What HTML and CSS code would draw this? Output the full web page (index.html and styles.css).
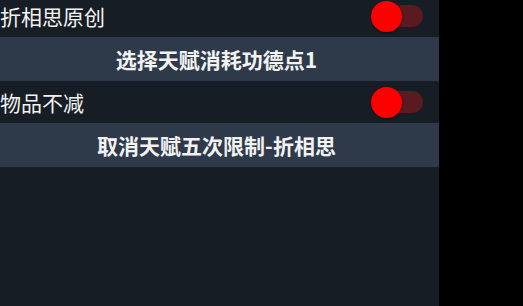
FILE: index.html
```html
<!DOCTYPE html>
<html>
<head>
<meta charset="utf-8">
<link rel="stylesheet" href="styles.css">
</head>
<body>
<div class="panel">
  <div class="list">
    <div class="row">
      <span class="label">折相思原创</span>
      <div class="switch"><div class="track"></div><div class="knob"></div></div>
    </div>
    <div class="button">选择天赋消耗功德点1</div>
    <div class="row">
      <span class="label">物品不减</span>
      <div class="switch"><div class="track"></div><div class="knob"></div></div>
    </div>
    <div class="button">取消天赋五次限制-折相思</div>
  </div>
</div>
</body>
</html>
```
FILE: styles.css
```css
html, body {
  margin: 0;
  padding: 0;
  background: #000;
  width: 523px;
  height: 306px;
  overflow: hidden;
}
.panel {
  width: 439px;
  height: 306px;
  background: #171d24;
  overflow: hidden;
  font-family: "Noto Sans CJK SC", "Noto Sans", sans-serif;
  color: #f2f2f2;
}
.list {
  margin-top: -5px;
  display: flex;
  flex-direction: column;
}
.row {
  height: 42px;
  display: flex;
  align-items: center;
  justify-content: space-between;
  font-size: 21px;
}
.label {
  line-height: 1;
  margin-left: 0;
}
.switch {
  position: relative;
  width: 52px;
  height: 31px;
  margin-right: 16px;
}
.track {
  position: absolute;
  right: 0;
  top: 4.5px;
  width: 43px;
  height: 22px;
  border-radius: 11px;
  background: #5a1a20;
}
.knob {
  position: absolute;
  left: 0;
  top: 0;
  width: 31px;
  height: 31px;
  border-radius: 50%;
  background: #ff0000;
  box-shadow: 0 1px 2px rgba(0, 0, 0, 0.5);
}
.button {
  height: 44px;
  background: #2e3a4a;
  display: flex;
  align-items: center;
  justify-content: center;
  font-size: 21px;
  font-weight: bold;
  line-height: 1;
  padding-right: 6px;
}
```
